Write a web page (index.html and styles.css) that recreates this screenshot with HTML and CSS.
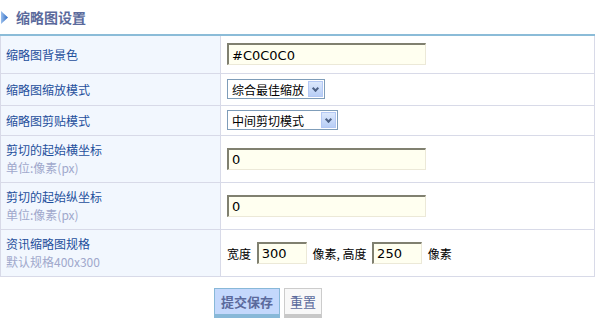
FILE: index.html
```html
<!DOCTYPE html>
<html lang="zh-CN">
<head>
  <meta charset="UTF-8">
  <title>缩略图设置</title>
  <link rel="stylesheet" href="styles.css">
</head>
<body>
  <h3 class="title">
    <svg class="arrow" width="8" height="13" viewBox="0 0 8 13">
      <defs>
        <linearGradient id="ag" x1="0" y1="0" x2="1" y2="0">
          <stop offset="0" stop-color="#9cc0ec"/>
          <stop offset="1" stop-color="#2a68c4"/>
        </linearGradient>
      </defs>
      <polygon points="0,0 7,6.5 0,13" fill="url(#ag)"/>
    </svg>
    缩略图设置
  </h3>
  <form class="setting">
    <table class="grid">
      <tr class="r1">
        <th>缩略图背景色</th>
        <td><input class="txt" type="text" value="#C0C0C0"></td>
      </tr>
      <tr class="r2">
        <th>缩略图缩放模式</th>
        <td>
          <span class="sel sel-a"><span class="sel-text">综合最佳缩放</span><span class="sel-btn"></span></span>
        </td>
      </tr>
      <tr class="r3">
        <th>缩略图剪贴模式</th>
        <td>
          <span class="sel sel-b"><span class="sel-text">中间剪切模式</span><span class="sel-btn"></span></span>
        </td>
      </tr>
      <tr class="r4">
        <th>剪切的起始横坐标<span class="tip">单位:像素(px)</span></th>
        <td><input class="txt" type="text" value="0"></td>
      </tr>
      <tr class="r4">
        <th>剪切的起始纵坐标<span class="tip">单位:像素(px)</span></th>
        <td><input class="txt" type="text" value="0"></td>
      </tr>
      <tr class="r4">
        <th>资讯缩略图规格<span class="tip">默认规格400x300</span></th>
        <td class="size">
          宽度 <input class="txt small" type="text" value="300"> 像素, 高度 <input class="txt small" type="text" value="250"> 像素
        </td>
      </tr>
    </table>
    <div class="actions">
      <button type="button" class="btn btn-submit">提交保存</button>
      <button type="button" class="btn btn-reset">重置</button>
    </div>
  </form>
</body>
</html>
```

FILE: styles.css
```css
body {
  margin: 0;
  font-family: "Noto Sans CJK SC", "DejaVu Sans", sans-serif;
  font-size: 12px;
  background: #fff;
}

.title {
  display: flex;
  align-items: center;
  margin: 0;
  height: 34px;
  padding-left: 1px;
  font-size: 14px;
  font-weight: bold;
  color: #5b6a9c;
}

.arrow {
  margin-right: 7px;
  margin-top: 1px;
}

.grid {
  width: 595px;
  border-collapse: collapse;
  border-top: 2px solid #8bbcd8;
}

.grid th,
.grid td {
  border: 1px solid #d8dae8;
  padding: 0 6px;
  text-align: left;
  vertical-align: middle;
}

.grid th {
  width: 208px;
  padding-left: 5px;
  background: #f2f7fe;
  color: #1e4f9c;
  font-weight: normal;
  line-height: 17px;
}

.r1 { height: 38px; }
.r2 { height: 32px; }
.r3 { height: 30px; }
.r4 { height: 47px; }

.tip {
  display: block;
  color: #a0a8cc;
  margin-top: 1px;
}

.txt {
  box-sizing: border-box;
  width: 199px;
  height: 22px;
  margin: 0;
  padding: 1px 3px 0;
  border: 2px solid #808070;
  border-right: 1px solid #ece9d8;
  border-bottom: 1px solid #ece9d8;
  background: #fffff0;
  font-family: "DejaVu Sans", sans-serif;
  font-size: 13px;
  color: #000;
}

.txt.small {
  width: 50px;
  margin: 0 3px;
}

.size {
  padding-top: 8px;
}

.sel {
  display: inline-flex;
  align-items: center;
  box-sizing: border-box;
  height: 20px;
  border: 1px solid #7f9db9;
  background: #fff;
  vertical-align: middle;
}

.sel-a { width: 98px; }
.sel-b { width: 111px; }

.sel-text {
  flex: 1;
  padding-left: 4px;
  font-size: 12px;
  color: #000;
}

.sel-btn {
  position: relative;
  width: 15px;
  height: 16px;
  margin-right: 1px;
  border: 1px solid #b4c8f4;
  box-sizing: border-box;
  background: linear-gradient(#dce8fc, #b8cef6);
}

.sel-btn::after {
  content: "";
  position: absolute;
  left: 4px;
  top: 4px;
  width: 3px;
  height: 3px;
  border-right: 2px solid #4d6185;
  border-bottom: 2px solid #4d6185;
  transform: rotate(45deg);
}

.actions {
  display: flex;
  gap: 4px;
  padding: 11px 0 0 214px;
}

.btn {
  box-sizing: border-box;
  height: 30px;
  margin: 0;
  padding: 0;
  font-family: "Noto Sans CJK SC", sans-serif;
  font-size: 13px;
  cursor: pointer;
}

.btn-submit {
  width: 66px;
  border: 1px solid #88b8d8;
  border-bottom: 4px solid #88b8d8;
  background: #c4d8fc;
  color: #5b6a9c;
  font-weight: bold;
}

.btn-reset {
  width: 38px;
  border: 1px solid #cccccc;
  border-bottom: 4px solid #c8c8c8;
  background: #f8f8f8;
  color: #5b6a9c;
}
```
